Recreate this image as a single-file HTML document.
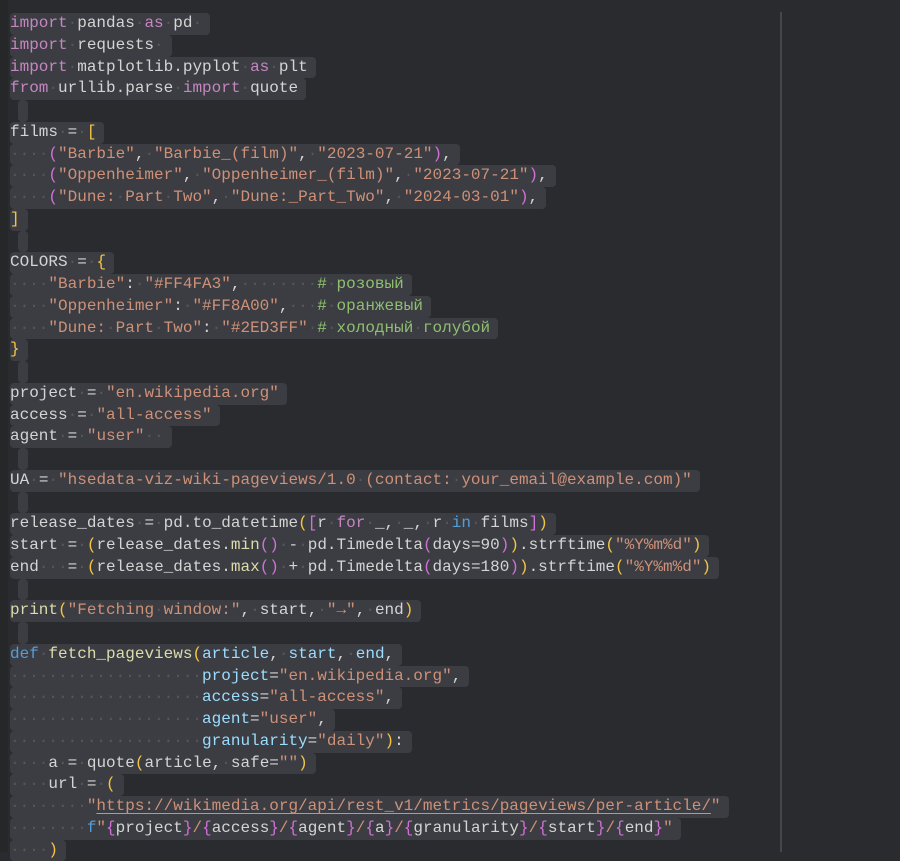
<!DOCTYPE html>
<html><head><meta charset="utf-8"><style>
html,body{margin:0;padding:0;background:#2a2b2e;width:900px;height:852px;overflow:hidden}
.g{position:absolute;left:0;top:0;width:8px;height:852px;background:#262729}
.r{position:absolute;left:780px;top:12px;width:2px;height:840px;background:#45474b}
.code{position:absolute;left:10px;top:13px;font-family:"Liberation Mono",monospace;font-size:16px;color:#d4d4d4}
.l{height:21.75px;line-height:21.75px;white-space:pre}
.l>span{display:inline-block;background:#3b3d43;border-radius:4px;padding-right:8px;height:21.75px;vertical-align:top}
.e>span{margin-left:8px;width:10px;padding:0}
i{font-style:normal;color:#55575c}
.k{color:#c586c0}.s{color:#ce9178}.c{color:#8fbf6f}.y{color:#f5c542}.p{color:#d070d6}
.f{color:#dcdcaa}.b{color:#569cd6}.v{color:#9cdcfe}
.u{text-decoration:underline;text-decoration-color:#ce9178;text-underline-offset:3px}
</style></head><body>
<div class="g"></div><div class="r"></div>
<div class="code">
<div class="l"><span><span class="k">import</span><i>·</i>pandas<i>·</i><span class="k">as</span><i>·</i>pd<i>·</i></span></div>
<div class="l"><span><span class="k">import</span><i>·</i>requests<i>·</i></span></div>
<div class="l"><span><span class="k">import</span><i>·</i>matplotlib.pyplot<i>·</i><span class="k">as</span><i>·</i>plt</span></div>
<div class="l"><span><span class="k">from</span><i>·</i>urllib.parse<i>·</i><span class="k">import</span><i>·</i>quote</span></div>
<div class="l e"><span> </span></div>
<div class="l"><span>films<i>·</i>=<i>·</i><span class="y">[</span></span></div>
<div class="l"><span><i>····</i><span class="p">(</span><span class="s">"Barbie"</span>,<i>·</i><span class="s">"Barbie_(film)"</span>,<i>·</i><span class="s">"2023-07-21"</span><span class="p">)</span>,</span></div>
<div class="l"><span><i>····</i><span class="p">(</span><span class="s">"Oppenheimer"</span>,<i>·</i><span class="s">"Oppenheimer_(film)"</span>,<i>·</i><span class="s">"2023-07-21"</span><span class="p">)</span>,</span></div>
<div class="l"><span><i>····</i><span class="p">(</span><span class="s">"Dune:<i>·</i>Part<i>·</i>Two"</span>,<i>·</i><span class="s">"Dune:_Part_Two"</span>,<i>·</i><span class="s">"2024-03-01"</span><span class="p">)</span>,</span></div>
<div class="l"><span><span class="y">]</span></span></div>
<div class="l e"><span> </span></div>
<div class="l"><span>COLORS<i>·</i>=<i>·</i><span class="y">{</span></span></div>
<div class="l"><span><i>····</i><span class="s">"Barbie"</span>:<i>·</i><span class="s">"#FF4FA3"</span>,<i>········</i><span class="c">#<i>·</i>розовый</span></span></div>
<div class="l"><span><i>····</i><span class="s">"Oppenheimer"</span>:<i>·</i><span class="s">"#FF8A00"</span>,<i>···</i><span class="c">#<i>·</i>оранжевый</span></span></div>
<div class="l"><span><i>····</i><span class="s">"Dune:<i>·</i>Part<i>·</i>Two"</span>:<i>·</i><span class="s">"#2ED3FF"</span><i>·</i><span class="c">#<i>·</i>холодный<i>·</i>голубой</span></span></div>
<div class="l"><span><span class="y">}</span></span></div>
<div class="l e"><span> </span></div>
<div class="l"><span>project<i>·</i>=<i>·</i><span class="s">"en.wikipedia.org"</span></span></div>
<div class="l"><span>access<i>·</i>=<i>·</i><span class="s">"all-access"</span></span></div>
<div class="l"><span>agent<i>·</i>=<i>·</i><span class="s">"user"</span><i>··</i></span></div>
<div class="l e"><span> </span></div>
<div class="l"><span>UA<i>·</i>=<i>·</i><span class="s">"hsedata-viz-wiki-pageviews/1.0<i>·</i>(contact:<i>·</i>your_email@example.com)"</span></span></div>
<div class="l e"><span> </span></div>
<div class="l"><span>release_dates<i>·</i>=<i>·</i>pd.to_datetime<span class="y">(</span><span class="p">[</span>r<i>·</i><span class="k">for</span><i>·</i>_,<i>·</i>_,<i>·</i>r<i>·</i><span class="b">in</span><i>·</i>films<span class="p">]</span><span class="y">)</span></span></div>
<div class="l"><span>start<i>·</i>=<i>·</i><span class="y">(</span>release_dates.<span class="f">min</span><span class="p">()</span><i>·</i>-<i>·</i>pd.Timedelta<span class="p">(</span>days=90<span class="p">)</span><span class="y">)</span>.strftime<span class="y">(</span><span class="s">"%Y%m%d"</span><span class="y">)</span></span></div>
<div class="l"><span>end<i>···</i>=<i>·</i><span class="y">(</span>release_dates.<span class="f">max</span><span class="p">()</span><i>·</i>+<i>·</i>pd.Timedelta<span class="p">(</span>days=180<span class="p">)</span><span class="y">)</span>.strftime<span class="y">(</span><span class="s">"%Y%m%d"</span><span class="y">)</span></span></div>
<div class="l e"><span> </span></div>
<div class="l"><span><span class="f">print</span><span class="y">(</span><span class="s">"Fetching<i>·</i>window:"</span>,<i>·</i>start,<i>·</i><span class="s">"→"</span>,<i>·</i>end<span class="y">)</span></span></div>
<div class="l e"><span> </span></div>
<div class="l"><span><span class="b">def</span><i>·</i><span class="f">fetch_pageviews</span><span class="y">(</span><span class="v">article</span>,<i>·</i><span class="v">start</span>,<i>·</i><span class="v">end</span>,</span></div>
<div class="l"><span><i>····················</i><span class="v">project</span>=<span class="s">"en.wikipedia.org"</span>,</span></div>
<div class="l"><span><i>····················</i><span class="v">access</span>=<span class="s">"all-access"</span>,</span></div>
<div class="l"><span><i>····················</i><span class="v">agent</span>=<span class="s">"user"</span>,</span></div>
<div class="l"><span><i>····················</i><span class="v">granularity</span>=<span class="s">"daily"</span><span class="y">)</span>:</span></div>
<div class="l"><span><i>····</i>a<i>·</i>=<i>·</i>quote<span class="y">(</span>article,<i>·</i>safe=<span class="s">""</span><span class="y">)</span></span></div>
<div class="l"><span><i>····</i>url<i>·</i>=<i>·</i><span class="y">(</span></span></div>
<div class="l"><span><i>········</i><span class="s">"<span class="u">https://wikimedia.org/api/rest_v1/metrics/pageviews/per-article/</span>"</span></span></div>
<div class="l"><span><i>········</i><span class="b">f</span><span class="s">"</span><span class="p">{</span>project<span class="p">}</span><span class="s">/</span><span class="p">{</span>access<span class="p">}</span><span class="s">/</span><span class="p">{</span>agent<span class="p">}</span><span class="s">/</span><span class="p">{</span>a<span class="p">}</span><span class="s">/</span><span class="p">{</span>granularity<span class="p">}</span><span class="s">/</span><span class="p">{</span>start<span class="p">}</span><span class="s">/</span><span class="p">{</span>end<span class="p">}</span><span class="s">"</span></span></div>
<div class="l"><span><i>····</i><span class="y">)</span></span></div>
</div>
</body></html>
